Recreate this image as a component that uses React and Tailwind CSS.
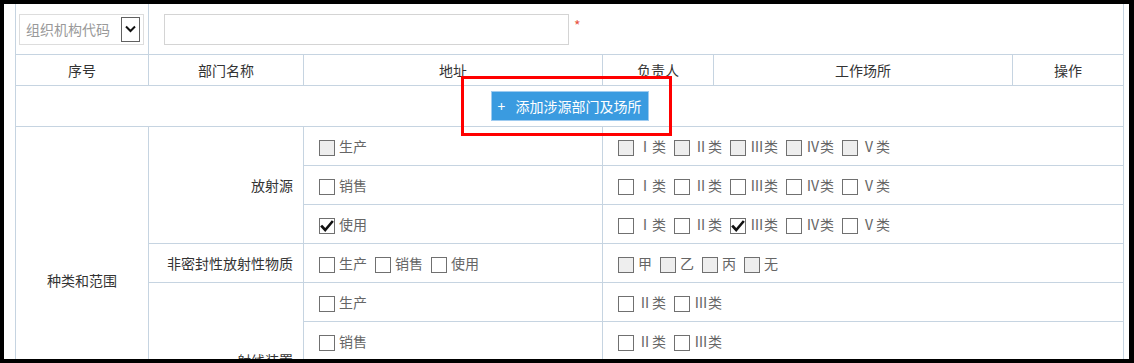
import React from 'react';

const Box = ({ checked = false, gray = false }) => (
  <span
    className={
      'mt-[4px] flex h-[16px] w-[16px] shrink-0 items-center justify-center border border-[#707070] ' +
      (gray ? 'bg-[#eeeeee]' : 'bg-white')
    }
  >
    {checked && (
      <svg width="14" height="14" viewBox="0 0 14 14">
        <path d="M2 7.5 L5.2 11 L12 3" fill="none" stroke="#111" strokeWidth="2.6" strokeLinecap="square" />
      </svg>
    )}
  </span>
);

const Opts = ({ items, gray = false, checked = [] }) => (
  <div className="flex items-center">
    {items.map((t) => (
      <label key={t} className="mr-[8px] flex items-center gap-[4px]">
        <Box gray={gray} checked={checked.includes(t)} />
        <span className="text-[#666]">{t}</span>
      </label>
    ))}
  </div>
);

const Cell = ({ className = '', children }) => (
  <div className={'border-b border-r border-[#c6d4e1] ' + className}>{children}</div>
);

const LEVELS = ['Ⅰ类', 'Ⅱ类', 'Ⅲ类', 'Ⅳ类', 'Ⅴ类'];

// address column + work place column, one entry per body row
const rows = [
  { addr: ['生产'], gray: true, work: LEVELS, workGray: true },
  { addr: ['销售'], work: LEVELS },
  { addr: ['使用'], addrChecked: ['使用'], work: LEVELS, workChecked: ['Ⅲ类'] },
  { addr: ['生产', '销售', '使用'], work: ['甲', '乙', '丙', '无'], workGray: true },
  { addr: ['生产'], work: ['Ⅱ类', 'Ⅲ类'] },
  { addr: ['销售'], work: ['Ⅱ类', 'Ⅲ类'] },
  { addr: ['使用'], work: ['Ⅱ类', 'Ⅲ类'] },
  { addr: ['维修'], work: ['Ⅱ类', 'Ⅲ类'] },
];

export default function App() {
  return (
    <div className="h-[363px] w-[1134px] bg-black pl-[4px] pt-[4px] font-['Noto_Sans_CJK_SC',sans-serif] text-[14px] text-[#333]">
      <div className="relative h-[355px] w-[1125px] overflow-hidden bg-white pl-[11px]">
        <div className="grid w-[1109px] grid-cols-[133px_155px_299px_111px_299px_111px] grid-rows-[51px_31px_41px_repeat(8,39px)] border-l border-[#c6d4e1]">
          {/* search row */}
          <Cell className="flex items-center pl-[3px]">
            <div className="flex h-[31px] w-[125px] items-center justify-between border border-[#dddddd] pl-[6px] pr-[3px]">
              <span className="text-[#999]">组织机构代码</span>
              <span className="flex h-[25px] w-[19px] items-center justify-center border border-[#606060] bg-white">
                <svg width="11" height="8" viewBox="0 0 11 8">
                  <path d="M1 1.5 L5.5 6 L10 1.5" fill="none" stroke="#111" strokeWidth="2" />
                </svg>
              </span>
            </div>
          </Cell>
          <Cell className="col-span-5 flex items-center pl-[15px]">
            <div className="h-[31px] w-[405px] border border-[#d4d4d4]" />
            <span className="mb-[8px] ml-[5px] text-[#e8533f]">*</span>
          </Cell>

          {/* header */}
          {['序号', '部门名称', '地址', '负责人', '工作场所', '操作'].map((h) => (
            <Cell key={h} className="flex items-center justify-center">
              {h}
            </Cell>
          ))}

          {/* add button */}
          <Cell className="col-span-6 flex items-center justify-center">
            <button className="flex h-[30px] w-[158px] items-center justify-center gap-[10px] border border-[#9ecbf0] bg-[#3a9be0] text-white">
              <span>+</span>
              <span>添加涉源部门及场所</span>
            </button>
          </Cell>

          {/* body */}
          {rows.map((r, i) => (
            <React.Fragment key={i}>
              {i === 0 && (
                <Cell className="row-span-8 flex items-center justify-center pb-[4px]">种类和范围</Cell>
              )}
              {i === 0 && (
                <Cell className="row-span-3 flex items-center justify-end pr-[10px]">放射源</Cell>
              )}
              {i === 3 && (
                <Cell className="flex items-center justify-end pr-[10px]">非密封性放射性物质</Cell>
              )}
              {i === 4 && (
                <Cell className="row-span-4 flex items-center justify-end pr-[10px]">射线装置</Cell>
              )}
              <Cell className="flex items-center pl-[15px]">
                <Opts items={r.addr} gray={r.gray} checked={r.addrChecked || []} />
              </Cell>
              <Cell className="col-span-3 flex items-center pl-[15px]">
                <Opts items={r.work} gray={r.workGray} checked={r.workChecked || []} />
              </Cell>
            </React.Fragment>
          ))}
        </div>

        {/* highlight annotation */}
        <div className="pointer-events-none absolute left-[457px] top-[72px] h-[60px] w-[211px] border-[3px] border-[#ff0000]" />
      </div>
    </div>
  );
}
